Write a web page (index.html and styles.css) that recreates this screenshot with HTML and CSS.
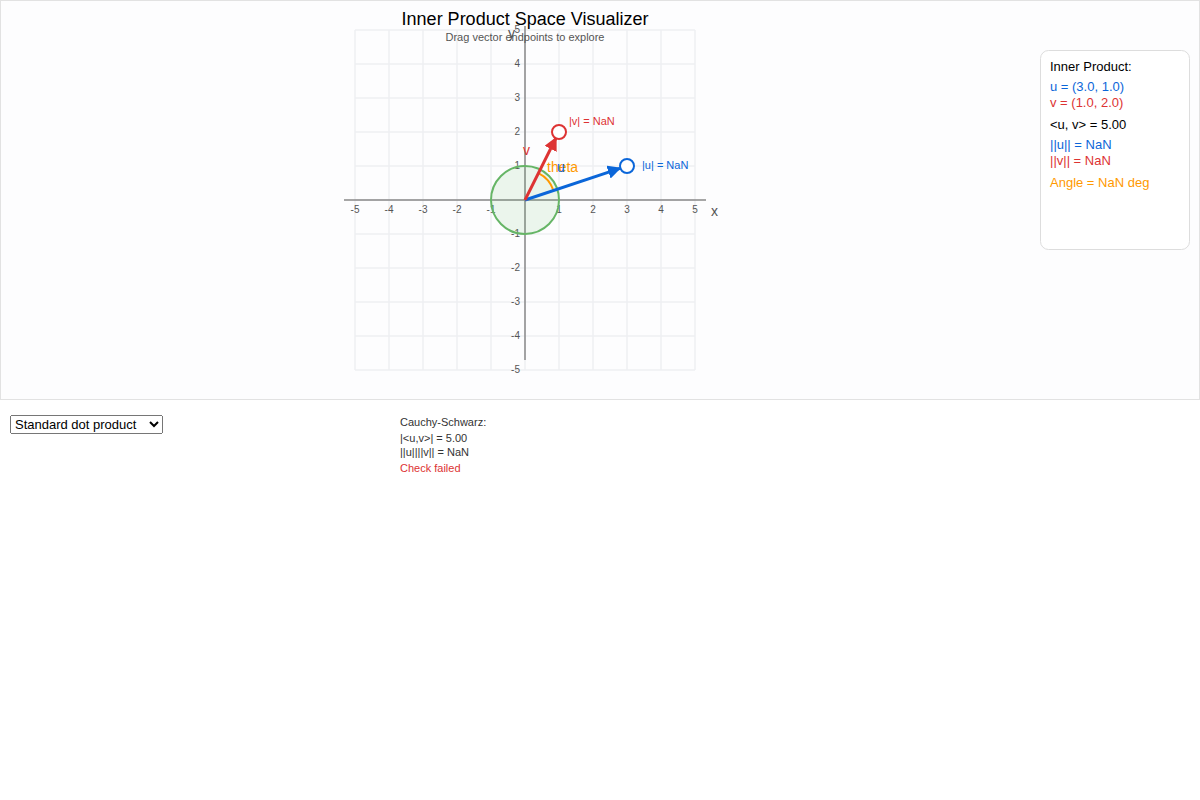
FILE: index.html
```html
<!DOCTYPE html>
<html>
<head>
<meta charset="utf-8">
<link rel="stylesheet" href="styles.css">
</head>
<body>
<div class="stage">
<svg class="plot" width="1200" height="400" viewBox="0 0 1200 400" xmlns="http://www.w3.org/2000/svg">
  <defs>
    <marker id="ah-u" viewBox="0 0 10 10" refX="9" refY="5" markerWidth="4.5" markerHeight="4.5" orient="auto">
      <path d="M0,0 L10,5 L0,10 z" fill="#0b66d9"/>
    </marker>
    <marker id="ah-v" viewBox="0 0 10 10" refX="9" refY="5" markerWidth="4.5" markerHeight="4.5" orient="auto">
      <path d="M0,0 L10,5 L0,10 z" fill="#dd3333"/>
    </marker>
  </defs>
  <rect class="frame" x="0.5" y="0.5" width="1199" height="399"/>
  <g class="grid">
    <line x1="355" y1="30" x2="355" y2="370"/>
    <line x1="389" y1="30" x2="389" y2="370"/>
    <line x1="423" y1="30" x2="423" y2="370"/>
    <line x1="457" y1="30" x2="457" y2="370"/>
    <line x1="491" y1="30" x2="491" y2="370"/>
    <line x1="525" y1="30" x2="525" y2="370"/>
    <line x1="559" y1="30" x2="559" y2="370"/>
    <line x1="593" y1="30" x2="593" y2="370"/>
    <line x1="627" y1="30" x2="627" y2="370"/>
    <line x1="661" y1="30" x2="661" y2="370"/>
    <line x1="695" y1="30" x2="695" y2="370"/>
    <line x1="355" y1="30" x2="695" y2="30"/>
    <line x1="355" y1="64" x2="695" y2="64"/>
    <line x1="355" y1="98" x2="695" y2="98"/>
    <line x1="355" y1="132" x2="695" y2="132"/>
    <line x1="355" y1="166" x2="695" y2="166"/>
    <line x1="355" y1="200" x2="695" y2="200"/>
    <line x1="355" y1="234" x2="695" y2="234"/>
    <line x1="355" y1="268" x2="695" y2="268"/>
    <line x1="355" y1="302" x2="695" y2="302"/>
    <line x1="355" y1="336" x2="695" y2="336"/>
    <line x1="355" y1="370" x2="695" y2="370"/>
  </g>
  <g class="axis">
    <line x1="344" y1="200" x2="706" y2="200"/>
    <line x1="525" y1="26" x2="525" y2="360"/>
  </g>
  <g class="ticks xt">
    <text x="355" y="213">-5</text>
    <text x="389" y="213">-4</text>
    <text x="423" y="213">-3</text>
    <text x="457" y="213">-2</text>
    <text x="491" y="213">-1</text>
    <text x="559" y="213">1</text>
    <text x="593" y="213">2</text>
    <text x="627" y="213">3</text>
    <text x="661" y="213">4</text>
    <text x="695" y="213">5</text>
  </g>
  <g class="ticks yt">
    <text x="520" y="33">5</text>
    <text x="520" y="67">4</text>
    <text x="520" y="101">3</text>
    <text x="520" y="135">2</text>
    <text x="520" y="169">1</text>
    <text x="520" y="237">-1</text>
    <text x="520" y="271">-2</text>
    <text x="520" y="305">-3</text>
    <text x="520" y="339">-4</text>
    <text x="520" y="373">-5</text>
  </g>
  <text class="axlabel" x="711" y="216">x</text>
  <text class="axlabel" x="508" y="38">y</text>
  <text class="title" x="525" y="25">Inner Product Space Visualizer</text>
  <text class="subtitle" x="525" y="41">Drag vector endpoints to explore</text>

  <circle class="unit" cx="525" cy="200" r="34"/>
  <path class="arc" d="M553.5,190.5 A30,30 0 0 0 538.4,173.2"/>

  <line class="vec-u" x1="525" y1="200" x2="620" y2="168.3" marker-end="url(#ah-u)"/>
  <line class="vec-v" x1="525" y1="200" x2="556" y2="138" marker-end="url(#ah-v)"/>
  <circle class="end-u" cx="627" cy="166" r="7"/>
  <circle class="end-v" cx="559" cy="132" r="7"/>

  <text class="lab-u small" x="642" y="169">|u| = NaN</text>
  <text class="lab-v small" x="569" y="125">|v| = NaN</text>
  <text class="lab-v big" x="523" y="155">v</text>
  <text class="lab-theta big" x="547" y="172">theta</text>
  <text class="lab-u big" x="557" y="172">u</text>

  <rect class="panel" x="1040.5" y="50.5" width="149" height="199" rx="8"/>
  <g class="info">
    <text x="1050" y="71">Inner Product:</text>
    <text class="c-u" x="1050" y="91">u = (3.0, 1.0)</text>
    <text class="c-v" x="1050" y="107">v = (1.0, 2.0)</text>
    <text x="1050" y="129">&lt;u, v&gt; = 5.00</text>
    <text class="c-u" x="1050" y="149">||u|| = NaN</text>
    <text class="c-v" x="1050" y="165">||v|| = NaN</text>
    <text class="c-a" x="1050" y="187">Angle = NaN deg</text>
  </g>
</svg>
</div>
<div class="controls">
  <div class="picker">
    <select class="ip-select">
      <option>Standard dot product</option>
      <option>Weighted inner product</option>
    </select>
  </div>
  <div class="cauchy">
    <div class="cs-head">Cauchy-Schwarz:</div>
    <div class="cs-line">|&lt;u,v&gt;| = 5.00</div>
    <div class="cs-line">||u||||v|| = NaN</div>
    <div class="cs-fail">Check failed</div>
  </div>
</div>
</body>
</html>
```
FILE: styles.css
```css
html, body {
  margin: 0;
  padding: 0;
  background: #ffffff;
  font-family: "Liberation Sans", Arial, Helvetica, sans-serif;
}
.stage {
  width: 1200px;
  height: 400px;
}
.plot {
  display: block;
}
.frame {
  fill: #fdfdfe;
  stroke: #e2e2e2;
  stroke-width: 1;
}
.grid line {
  stroke: #eeeff2;
  stroke-width: 1.5;
}
.axis line {
  stroke: #888888;
  stroke-width: 1.5;
}
.ticks text {
  font-size: 10px;
  fill: #555555;
}
.xt text {
  text-anchor: middle;
}
.yt text {
  text-anchor: end;
}
.axlabel {
  font-size: 14px;
  fill: #555555;
}
.title {
  font-size: 18px;
  fill: #000000;
  text-anchor: middle;
}
.subtitle {
  font-size: 11px;
  fill: #555555;
  text-anchor: middle;
}
.unit {
  fill: rgba(76, 175, 80, 0.1);
  stroke: #66b566;
  stroke-width: 2;
}
.arc {
  fill: none;
  stroke: #ff9900;
  stroke-width: 2;
}
.vec-u {
  stroke: #0b66d9;
  stroke-width: 3;
}
.vec-v {
  stroke: #dd3333;
  stroke-width: 3;
}
.end-u {
  fill: #ffffff;
  stroke: #0b66d9;
  stroke-width: 2;
}
.end-v {
  fill: #ffffff;
  stroke: #dd3333;
  stroke-width: 2;
}
.small {
  font-size: 11px;
}
.big {
  font-size: 14px;
}
.lab-u {
  fill: #0b66d9;
}
.lab-v {
  fill: #dd3333;
}
.lab-theta {
  fill: #ff9900;
}
.panel {
  fill: #ffffff;
  stroke: #dddddd;
  stroke-width: 1;
}
.info text {
  font-size: 13px;
  fill: #000000;
}
.info .c-u {
  fill: #0b66d9;
}
.info .c-v {
  fill: #dd3333;
}
.info .c-a {
  fill: #ff9900;
}
.controls {
  display: flex;
  padding: 15px 10px;
}
.picker {
  width: 390px;
}
.ip-select {
  font-family: "Liberation Sans", Arial, sans-serif;
  font-size: 13px;
  width: 153px;
}
.cauchy {
  font-size: 11px;
  color: #333333;
  line-height: 14px;
}
.cs-head {
  margin-bottom: 2px;
}
.cs-fail {
  margin-top: 2px;
  color: #dd3333;
}
```
